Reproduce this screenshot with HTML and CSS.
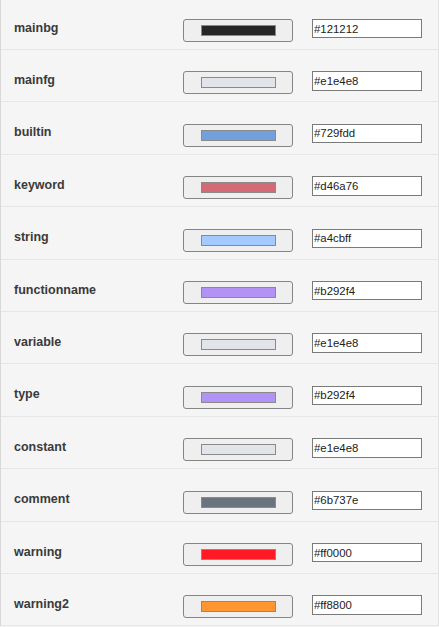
FILE: index.html
```html
<!DOCTYPE html>
<html>
<head>
<meta charset="utf-8">
<link rel="stylesheet" href="styles.css">
</head>
<body>
<div class="panel">
  <div class="row"><span class="label">mainbg</span><button class="pick"><span class="swatch" style="background:#262626"></span></button><input class="hex" type="text" value="#121212"></div>
  <div class="row"><span class="label">mainfg</span><button class="pick"><span class="swatch" style="background:#e1e4e8"></span></button><input class="hex" type="text" value="#e1e4e8"></div>
  <div class="row"><span class="label">builtin</span><button class="pick"><span class="swatch" style="background:#729fdd"></span></button><input class="hex" type="text" value="#729fdd"></div>
  <div class="row"><span class="label">keyword</span><button class="pick"><span class="swatch" style="background:#d46a76"></span></button><input class="hex" type="text" value="#d46a76"></div>
  <div class="row"><span class="label">string</span><button class="pick"><span class="swatch" style="background:#a4cbff"></span></button><input class="hex" type="text" value="#a4cbff"></div>
  <div class="row"><span class="label">functionname</span><button class="pick"><span class="swatch" style="background:#b292f4"></span></button><input class="hex" type="text" value="#b292f4"></div>
  <div class="row"><span class="label">variable</span><button class="pick"><span class="swatch" style="background:#e1e4e8"></span></button><input class="hex" type="text" value="#e1e4e8"></div>
  <div class="row"><span class="label">type</span><button class="pick"><span class="swatch" style="background:#b292f4"></span></button><input class="hex" type="text" value="#b292f4"></div>
  <div class="row"><span class="label">constant</span><button class="pick"><span class="swatch" style="background:#e1e4e8"></span></button><input class="hex" type="text" value="#e1e4e8"></div>
  <div class="row"><span class="label">comment</span><button class="pick"><span class="swatch" style="background:#6b737e"></span></button><input class="hex" type="text" value="#6b737e"></div>
  <div class="row"><span class="label">warning</span><button class="pick"><span class="swatch" style="background:#ff1a26"></span></button><input class="hex" type="text" value="#ff0000"></div>
  <div class="row"><span class="label">warning2</span><button class="pick"><span class="swatch" style="background:#ff9632"></span></button><input class="hex" type="text" value="#ff8800"></div>
</div>
</body>
</html>
```
FILE: styles.css
```css
html, body {
  margin: 0;
  padding: 0;
  background: #f5f5f5;
  overflow: hidden;
}
.panel {
  box-sizing: border-box;
  width: 439px;
  margin-top: -2.4px;
  border-left: 1px solid #d9d9d9;
  border-right: 1px solid #e2e2e2;
  background: #f5f5f5;
  font-family: "Liberation Sans", Arial, sans-serif;
}
.row {
  box-sizing: border-box;
  height: 52.4px;
  border-bottom: 1px solid #e6e6e6;
  display: flex;
  align-items: flex-start;
  padding: 21.4px 0 0 13px;
}
.label {
  width: 169px;
  margin-top: 1.6px;
  font-size: 12.5px;
  line-height: 15px;
  font-weight: bold;
  color: #3a3a3a;
}
.pick {
  box-sizing: border-box;
  width: 110px;
  height: 23px;
  margin: 0;
  padding: 0;
  border: 1px solid #858585;
  border-radius: 3px;
  background: #efefef;
  display: flex;
  align-items: center;
  justify-content: center;
}
.swatch {
  box-sizing: border-box;
  display: block;
  width: 75px;
  height: 11px;
  border: 1px solid #8a8a8a;
}
.hex {
  box-sizing: border-box;
  width: 110px;
  height: 19.4px;
  margin: 0 0 0 19px;
  padding: 0 0 0 1px;
  border: 1px solid #7a7a7a;
  border-radius: 0;
  background: #fff;
  font-family: "Liberation Sans", Arial, sans-serif;
  font-size: 11.4px;
  color: #222;
  outline: none;
}
```
